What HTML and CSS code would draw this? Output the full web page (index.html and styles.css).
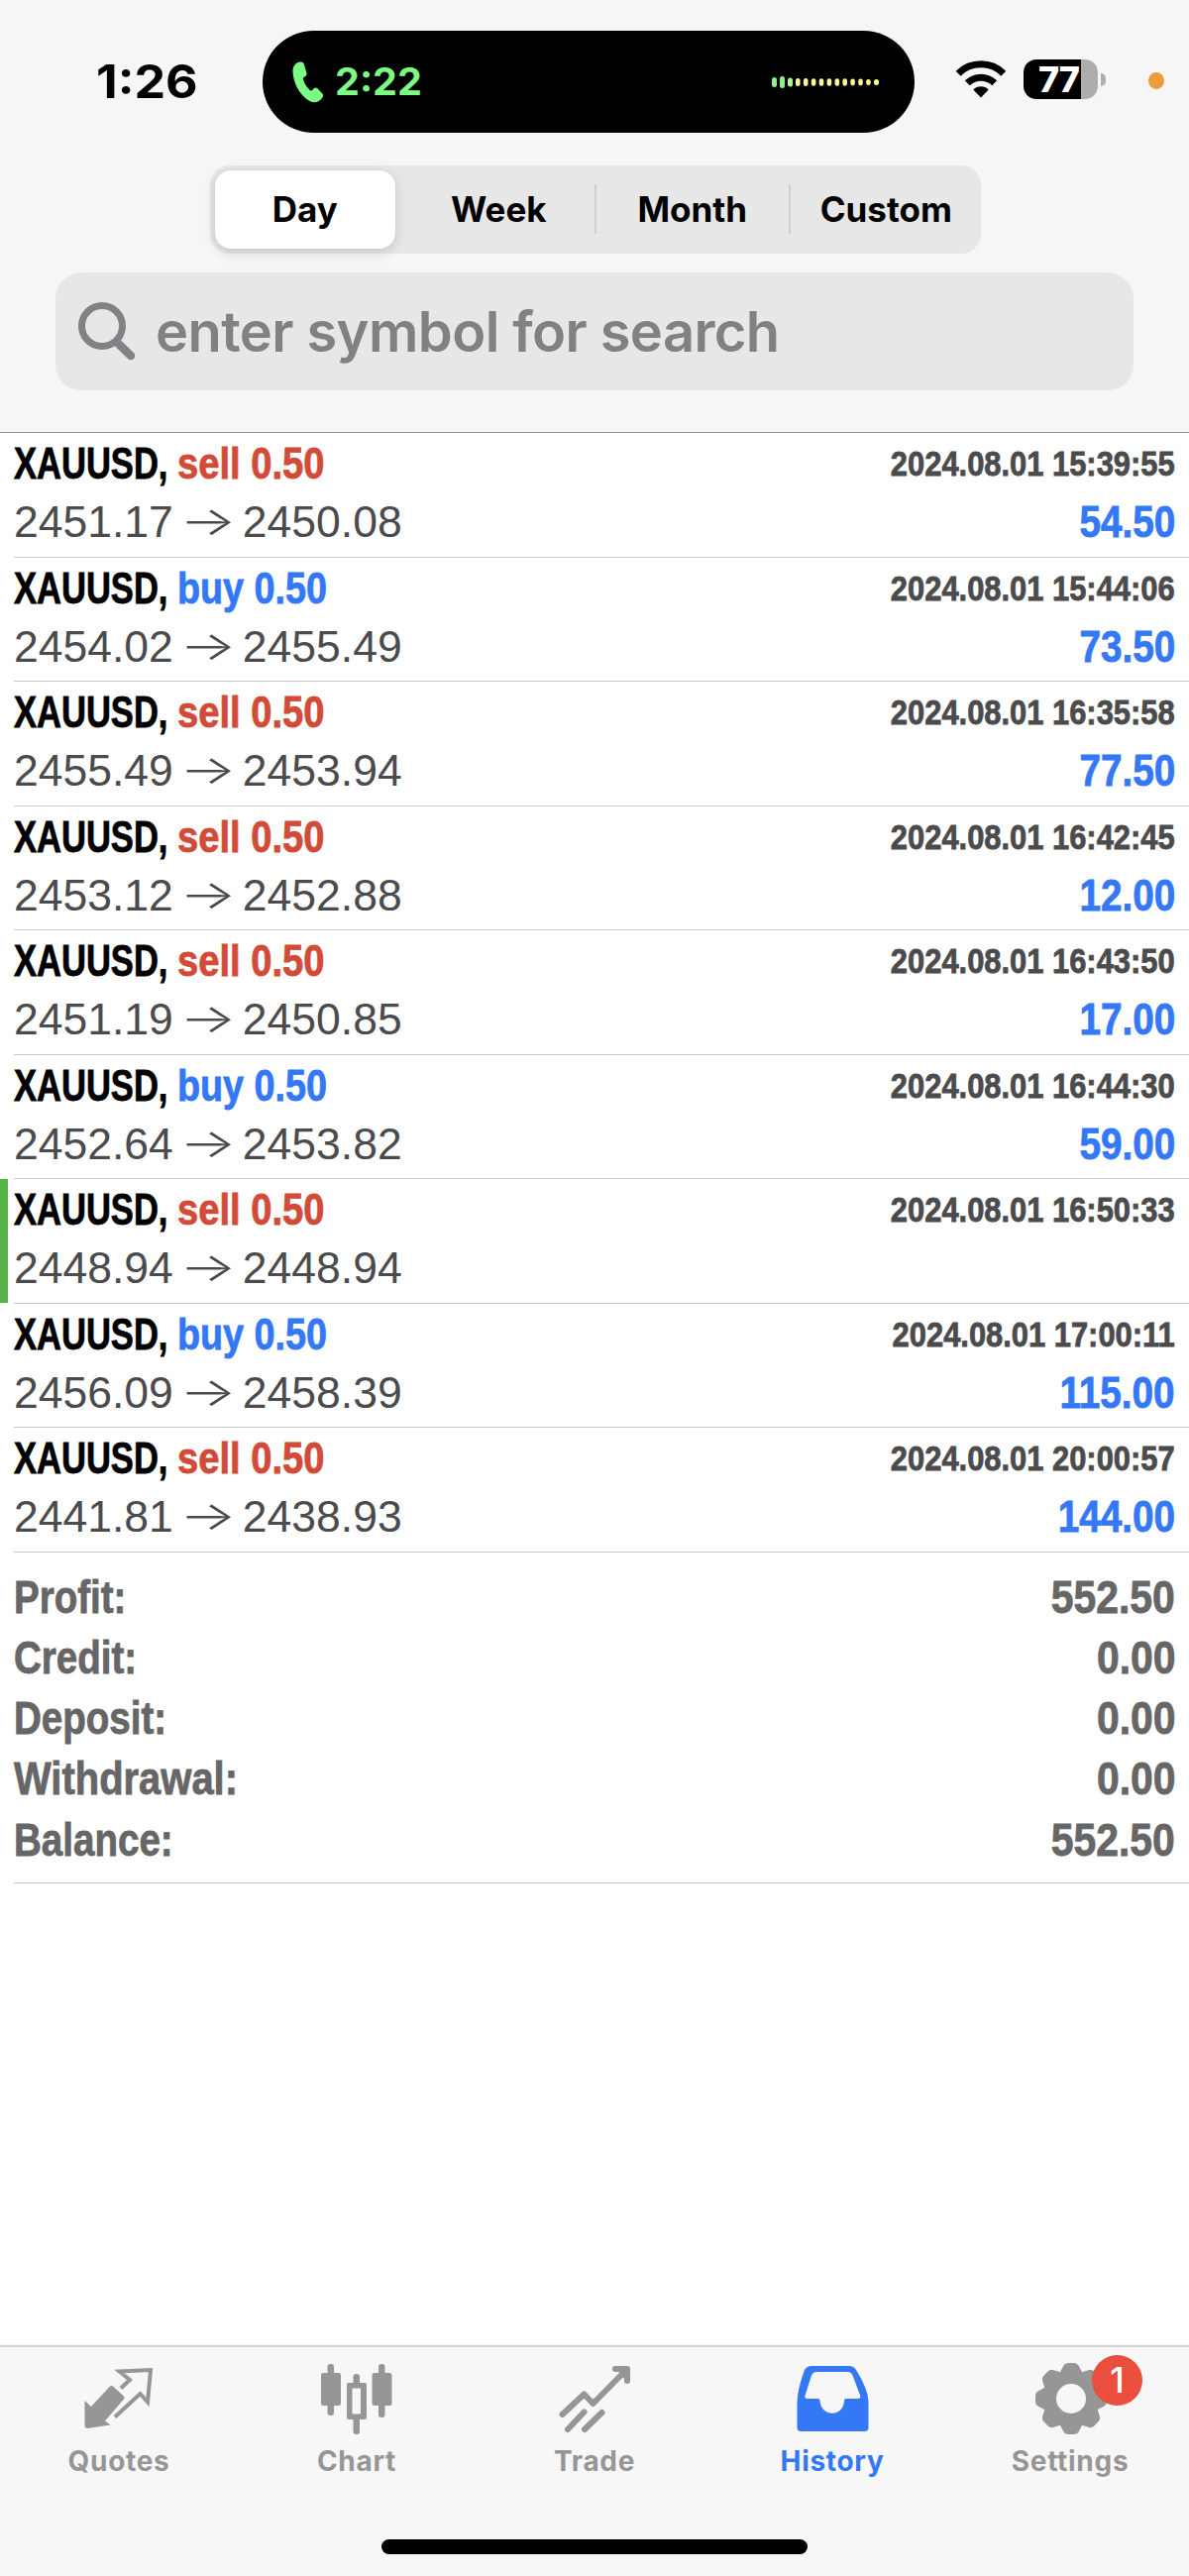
FILE: index.html
```html
<!DOCTYPE html>
<html lang="en">
<head>
<meta charset="utf-8">
<title>History</title>
<link rel="stylesheet" href="styles.css">
</head>
<body>
<div class="screen">
  <header class="header">
    <div class="status">
      <div class="clock"><span>1:26</span></div>
      <div class="island">
        <svg class="phone" width="31" height="42" viewBox="0 0 31 42"><path d="M0.5 9C1 4 4 1 8 .6c2-.2 3.300.6 3.900 2.400l2.500 8.400c.5 2-.2 3.300-1.800 4-1.500.7-2 1.500-1.500 3.100 1.200 4 3.600 7.800 6.600 10.400 1 .9 2 .7 2.900-.3l1.200-1.300c1-1.100 2.300-1.200 3.500-.2l5 5.300c1 1.200 1.100 2.500.2 3.800C27.500 41 22.500 42.500 17.500 40 7 34 .5 21 .5 9z" fill="#7cfb82"/></svg>
        <span class="call-time">2:22</span>
        <svg class="wave" width="110" height="14" viewBox="0 0 110 14"><g fill="#8cf08a"><rect x="0" y="2" width="5" height="10" rx="2.500"/><rect x="8" y="1" width="5" height="12" rx="2.500"/><rect x="16" y="2.500" width="5" height="9" rx="2.500" fill="#b0f58c"/></g><g fill="#f5f998"><rect x="24" y="3" width="4.600" height="8" rx="2.300"/><rect x="31.900" y="3" width="4.600" height="8" rx="2.300"/><rect x="39.800" y="3.300" width="4.600" height="7.400" rx="2.300"/><rect x="47.700" y="3.300" width="4.600" height="7.400" rx="2.300"/><rect x="55.600" y="3.300" width="4.600" height="7.400" rx="2.300"/><rect x="63.500" y="3.300" width="4.600" height="7.400" rx="2.300"/><rect x="71.400" y="3.300" width="4.600" height="7.400" rx="2.300"/><rect x="79.300" y="3.600" width="4.600" height="6.800" rx="2.300"/><rect x="87.200" y="3.600" width="4.600" height="6.800" rx="2.300"/><rect x="95.100" y="3.900" width="4.600" height="6.200" rx="2.300"/><rect x="103" y="4" width="5" height="6" rx="2.500"/></g></svg>
      </div>
      <svg class="wifi" width="52" height="38" viewBox="0 0 52 38"><path d="M26 37.500L18.300 29.500a11 11 0 0 1 15.400 0z"/><g fill="none" stroke="#000" stroke-width="7"><path d="M12.300 22.800a19.500 19.500 0 0 1 27.400 0"/><path d="M3.200 13.200a32.500 32.500 0 0 1 45.600 0"/></g></svg>
      <div class="battery"><div class="cell"><span>77</span></div><i class="nub"></i></div>
      <i class="mic-dot"></i>
    </div>
    <nav class="segments">
      <span class="seg active">Day</span><span class="seg">Week</span><span class="seg sep">Month</span><span class="seg sep">Custom</span>
    </nav>
    <div class="search">
      <svg width="58" height="60" viewBox="0 0 58 60" fill="none" stroke="#828286" stroke-linecap="round"><circle cx="24" cy="24" r="20.500" stroke-width="7"/><path d="M39 40.500L53 54" stroke-width="8.500"/></svg>
      <span>enter symbol for search</span>
    </div>
  </header>

  <main class="content">
    <ul class="deals">
      <li class="deal"><div class="line"><b class="symbol">XAUUSD,</b><b class="side sell">sell 0.50</b><b class="date">2024.08.01 15:39:55</b></div><div class="line"><span class="price">2451.17</span><span class="arrow">→</span><span class="price">2450.08</span><b class="profit">54.50</b></div></li>
      <li class="deal"><div class="line"><b class="symbol">XAUUSD,</b><b class="side buy">buy 0.50</b><b class="date">2024.08.01 15:44:06</b></div><div class="line"><span class="price">2454.02</span><span class="arrow">→</span><span class="price">2455.49</span><b class="profit">73.50</b></div></li>
      <li class="deal"><div class="line"><b class="symbol">XAUUSD,</b><b class="side sell">sell 0.50</b><b class="date">2024.08.01 16:35:58</b></div><div class="line"><span class="price">2455.49</span><span class="arrow">→</span><span class="price">2453.94</span><b class="profit">77.50</b></div></li>
      <li class="deal"><div class="line"><b class="symbol">XAUUSD,</b><b class="side sell">sell 0.50</b><b class="date">2024.08.01 16:42:45</b></div><div class="line"><span class="price">2453.12</span><span class="arrow">→</span><span class="price">2452.88</span><b class="profit">12.00</b></div></li>
      <li class="deal"><div class="line"><b class="symbol">XAUUSD,</b><b class="side sell">sell 0.50</b><b class="date">2024.08.01 16:43:50</b></div><div class="line"><span class="price">2451.19</span><span class="arrow">→</span><span class="price">2450.85</span><b class="profit">17.00</b></div></li>
      <li class="deal"><div class="line"><b class="symbol">XAUUSD,</b><b class="side buy">buy 0.50</b><b class="date">2024.08.01 16:44:30</b></div><div class="line"><span class="price">2452.64</span><span class="arrow">→</span><span class="price">2453.82</span><b class="profit">59.00</b></div></li>
      <li class="deal marked"><div class="line"><b class="symbol">XAUUSD,</b><b class="side sell">sell 0.50</b><b class="date">2024.08.01 16:50:33</b></div><div class="line"><span class="price">2448.94</span><span class="arrow">→</span><span class="price">2448.94</span></div></li>
      <li class="deal"><div class="line"><b class="symbol">XAUUSD,</b><b class="side buy">buy 0.50</b><b class="date">2024.08.01 17:00:11</b></div><div class="line"><span class="price">2456.09</span><span class="arrow">→</span><span class="price">2458.39</span><b class="profit">115.00</b></div></li>
      <li class="deal"><div class="line"><b class="symbol">XAUUSD,</b><b class="side sell">sell 0.50</b><b class="date">2024.08.01 20:00:57</b></div><div class="line"><span class="price">2441.81</span><span class="arrow">→</span><span class="price">2438.93</span><b class="profit">144.00</b></div></li>
    </ul>
    <div class="summary">
      <div class="total"><b class="label">Profit:</b><b class="value">552.50</b></div>
      <div class="total"><b class="label">Credit:</b><b class="value">0.00</b></div>
      <div class="total"><b class="label">Deposit:</b><b class="value">0.00</b></div>
      <div class="total"><b class="label wide">Withdrawal:</b><b class="value">0.00</b></div>
      <div class="total"><b class="label">Balance:</b><b class="value">552.50</b></div>
    </div>
  </main>

  <footer class="tabbar">
    <nav class="tabs">
      <a class="tab">
        <svg width="76" height="76" viewBox="0 0 76 76"><path d="M3.500 33l6.500 6L29 18.500q1.500-1.200 3 0l11 10q1.300 1.400 0 3L24 53.500l5.500 4L6.500 61q-3 0-3-3z" fill="#969696"/><path d="M40 20.500L49 12l-10.500-8.500L70 2 67 34.500 59.500 26 34 49.500" fill="none" stroke="#969696" stroke-width="4"/></svg>
        <span>Quotes</span>
      </a>
      <a class="tab">
        <svg width="76" height="76" viewBox="0 0 76 76" fill="#969696"><rect x="8.500" y="-4" width="6.500" height="52" rx="3"/><rect x="2" y="5" width="20" height="33" rx="2.500"/><rect x="60" y="-4" width="6.500" height="54" rx="3"/><rect x="53.500" y="5" width="20" height="33" rx="2.500"/><rect x="34.500" y="6" width="6.500" height="12" rx="3"/><rect x="34.500" y="48" width="6.500" height="19" rx="3"/><path fill-rule="evenodd" d="M30 15h16q2 0 2 2v33q0 2-2 2H30q-2 0-2-2V17q0-2 2-2zm4.500 5.500q-1 0-1 1v24q0 1 1 1h6.500q1 0 1-1v-24q0-1-1-1z"/></svg>
        <span>Chart</span>
      </a>
      <a class="tab">
        <svg width="76" height="76" viewBox="0 0 76 76" fill="none" stroke="#969696" stroke-width="6" stroke-linecap="round" stroke-linejoin="round"><path d="M5.500 47L27.500 26.500 36.500 36 69 3"/><path d="M59 1H71V13"/><path d="M66 3l3 4" stroke-width="7"/><path d="M11 62L27.500 44.500M28 62L45.500 45"/></svg>
        <span>Trade</span>
      </a>
      <a class="tab on">
        <svg width="76" height="76" viewBox="0 0 76 76"><path fill="#3478f6" fill-rule="evenodd" d="M17-2H55q4.500 0 7 4Q74 21 74.500 34V60q0 4-4 4H6.500q-4 0-4-4V34Q3 21 10 2q2.500-4 7-4zM22 4q-3.500 0-5 3.500L10.500 28q-.7 3 2 3H23.500q2 0 2 2c1 17 24 17 24.500 0q0-2 2-2H64q3 0 2-3.500L58.500 7.500Q57 4 54 4z"/></svg>
        <span>History</span>
      </a>
      <a class="tab">
        <svg width="76" height="76" viewBox="0 0 76 76"><g transform="translate(39 31)" fill="#969696"><path id="t" d="M-12-25L-7.500-33.500Q-6-36-3-36H3Q6-36 7.500-33.500L12-25V25L7.500 33.500Q6 36 3 36H-3Q-6 36-7.500 33.500L-12 25z"/><use href="#t" transform="rotate(45)"/><use href="#t" transform="rotate(90)"/><use href="#t" transform="rotate(135)"/><circle r="28"/><circle r="15" fill="#f7f7f7"/></g></svg>
        <span>Settings</span>
        <em class="badge">1</em>
      </a>
    </nav>
    <div class="home"></div>
  </footer>
</div>
</body>
</html>
```
FILE: styles.css
```css
* { box-sizing: border-box; }
body { margin: 0; background: #fff; }
.screen {
  width: 1200px;
  height: 2600px;
  display: flex;
  flex-direction: column;
  overflow: hidden;
  font-family: "Liberation Sans", Arial, sans-serif;
}
.header {
  height: 437px;
  flex: none;
  background: #f6f6f6;
  border-bottom: 1px solid #939395;
  font-family: Inter, "Liberation Sans", sans-serif;
}

/* status bar */
.status { display: flex; height: 167px; padding-top: 31px; }
.clock {
  width: 265px;
  padding-left: 97px;
  font-size: 46.500px;
  font-weight: 700;
  line-height: 102px;
}
.clock span { display: inline-block; transform: scaleX(1.080); transform-origin: left; }
.island {
  width: 658px;
  height: 103px;
  border-radius: 52px;
  background: #000;
  display: flex;
  align-items: center;
  padding: 0 34px 0 30px;
}
.call-time {
  margin-left: 12px;
  color: #7cfb82;
  font-size: 38px;
  font-weight: 700;
  line-height: 103px;
  transform: scaleX(1.040);
  transform-origin: left;
}
.wave { margin-left: auto; }
.wifi { margin: 30px 0 0 41px; }
.battery { display: flex; align-items: center; height: 40px; margin: 29px 0 0 17px; }
.cell {
  width: 75px;
  height: 40px;
  border-radius: 13px;
  background: linear-gradient(90deg, #000 58px, #adadad 58px);
  color: #fff;
  font-size: 36px;
  font-weight: 800;
  line-height: 40px;
  padding-left: 15px;
  letter-spacing: -1px;
}
.nub { width: 5px; height: 13px; margin-left: 3px; background: #adadad; border-radius: 0 5px 5px 0; }
.mic-dot { width: 16px; height: 17px; border-radius: 50%; background: #ef9b38; margin: 42px 0 0 43px; }

/* period switch */
.segments {
  width: 778px;
  height: 89px;
  margin-left: 212px;
  padding: 5px;
  border-radius: 20px;
  background: #e7e7e8;
  display: flex;
  gap: 14px;
}
.seg {
  width: 182px;
  height: 79px;
  position: relative;
  text-align: center;
  font-size: 35px;
  font-weight: 650;
  line-height: 79px;
}
.active {
  background: #fff;
  border-radius: 16px;
  font-weight: 700;
  box-shadow: 0 4px 14px rgba(0,0,0,.13), 0 0 3px rgba(0,0,0,.07);
}
.sep::before {
  content: "";
  position: absolute;
  left: -8px;
  top: 14px;
  width: 2px;
  height: 50px;
  background: #cfcfd2;
}
.search {
  width: 1088px;
  height: 119px;
  margin: 19px 0 0 56px;
  padding: 0 23px;
  border-radius: 26px;
  background: #e7e7e8;
  display: flex;
  align-items: center;
  gap: 20px;
  color: #818184;
  font-size: 56px;
  font-weight: 600;
  letter-spacing: -.6px;
  white-space: nowrap;
}

/* deal list */
.content { flex: 1; min-height: 0; }
.deals { list-style: none; margin: 0; padding: 0; }
.deal {
  height: 125.500px;
  margin-left: 14px;
  padding: 7px 14px 0 0;
  border-bottom: 1px solid #c9c9cb;
  display: flex;
  flex-direction: column;
  gap: 11px;
}
.line { display: flex; height: 48px; line-height: 48px; font-size: 44px; white-space: nowrap; }
.line b, .total b { -webkit-text-stroke: .8px currentColor; }
.symbol { width: 165px; transform: scaleX(.785); transform-origin: left; }
.side { transform: scaleX(.867); transform-origin: left; }
.sell { color: #d24b38; }
.buy { color: #3478f6; transform: scaleX(.858); }
.date, .profit, .value { margin-left: auto; transform: scaleX(.87); transform-origin: right; }
.date { font-size: 35.500px; color: #4b4b4d; }
.price { font-size: 44.500px; color: #4b4b4d; }
.arrow { width: 70px; text-align: center; font: 300 40px/46px Inter, sans-serif; color: #4b4b4d; transform: scaleX(1.520); }
.profit { font-size: 44.500px; color: #3478f6; }
.marked { position: relative; }
.marked::before {
  content: "";
  position: absolute;
  left: -14px;
  top: 0;
  width: 8px;
  height: 125px;
  background: #55b348;
}

/* totals */
.summary {
  height: 334px;
  margin-left: 14px;
  padding: 14px 14px 0 0;
  border-bottom: 1px solid #c9c9cb;
}
.total {
  display: flex;
  height: 61.300px;
  line-height: 61px;
  font-size: 47px;
  color: #666;
}
.label { transform: scaleX(.82); transform-origin: left; }
.wide { transform: scaleX(.85); }

/* tab bar */
.tabbar { flex: none; height: 233px; background: #f7f7f7; border-top: 2px solid #d2d2d2; }
.tabs { display: flex; height: 194px; }
.tab {
  flex: 1;
  position: relative;
  display: flex;
  flex-direction: column;
  align-items: center;
  gap: 1px;
  padding-top: 21px;
  color: #969696;
  font: 650 28px/34px Inter, sans-serif;
  letter-spacing: .7px;
}
.tab svg { overflow: visible; }
.on { color: #3478f6; }
.badge {
  position: absolute;
  left: 142px;
  top: 8px;
  width: 51px;
  height: 51px;
  border-radius: 50%;
  background: #ea4e3d;
  color: #fff;
  font: 500 35px/51px Inter, sans-serif;
  letter-spacing: 0;
  text-align: center;
}
.home { width: 430px; height: 15px; margin: 0 auto; border-radius: 8px; background: #000; }
```
